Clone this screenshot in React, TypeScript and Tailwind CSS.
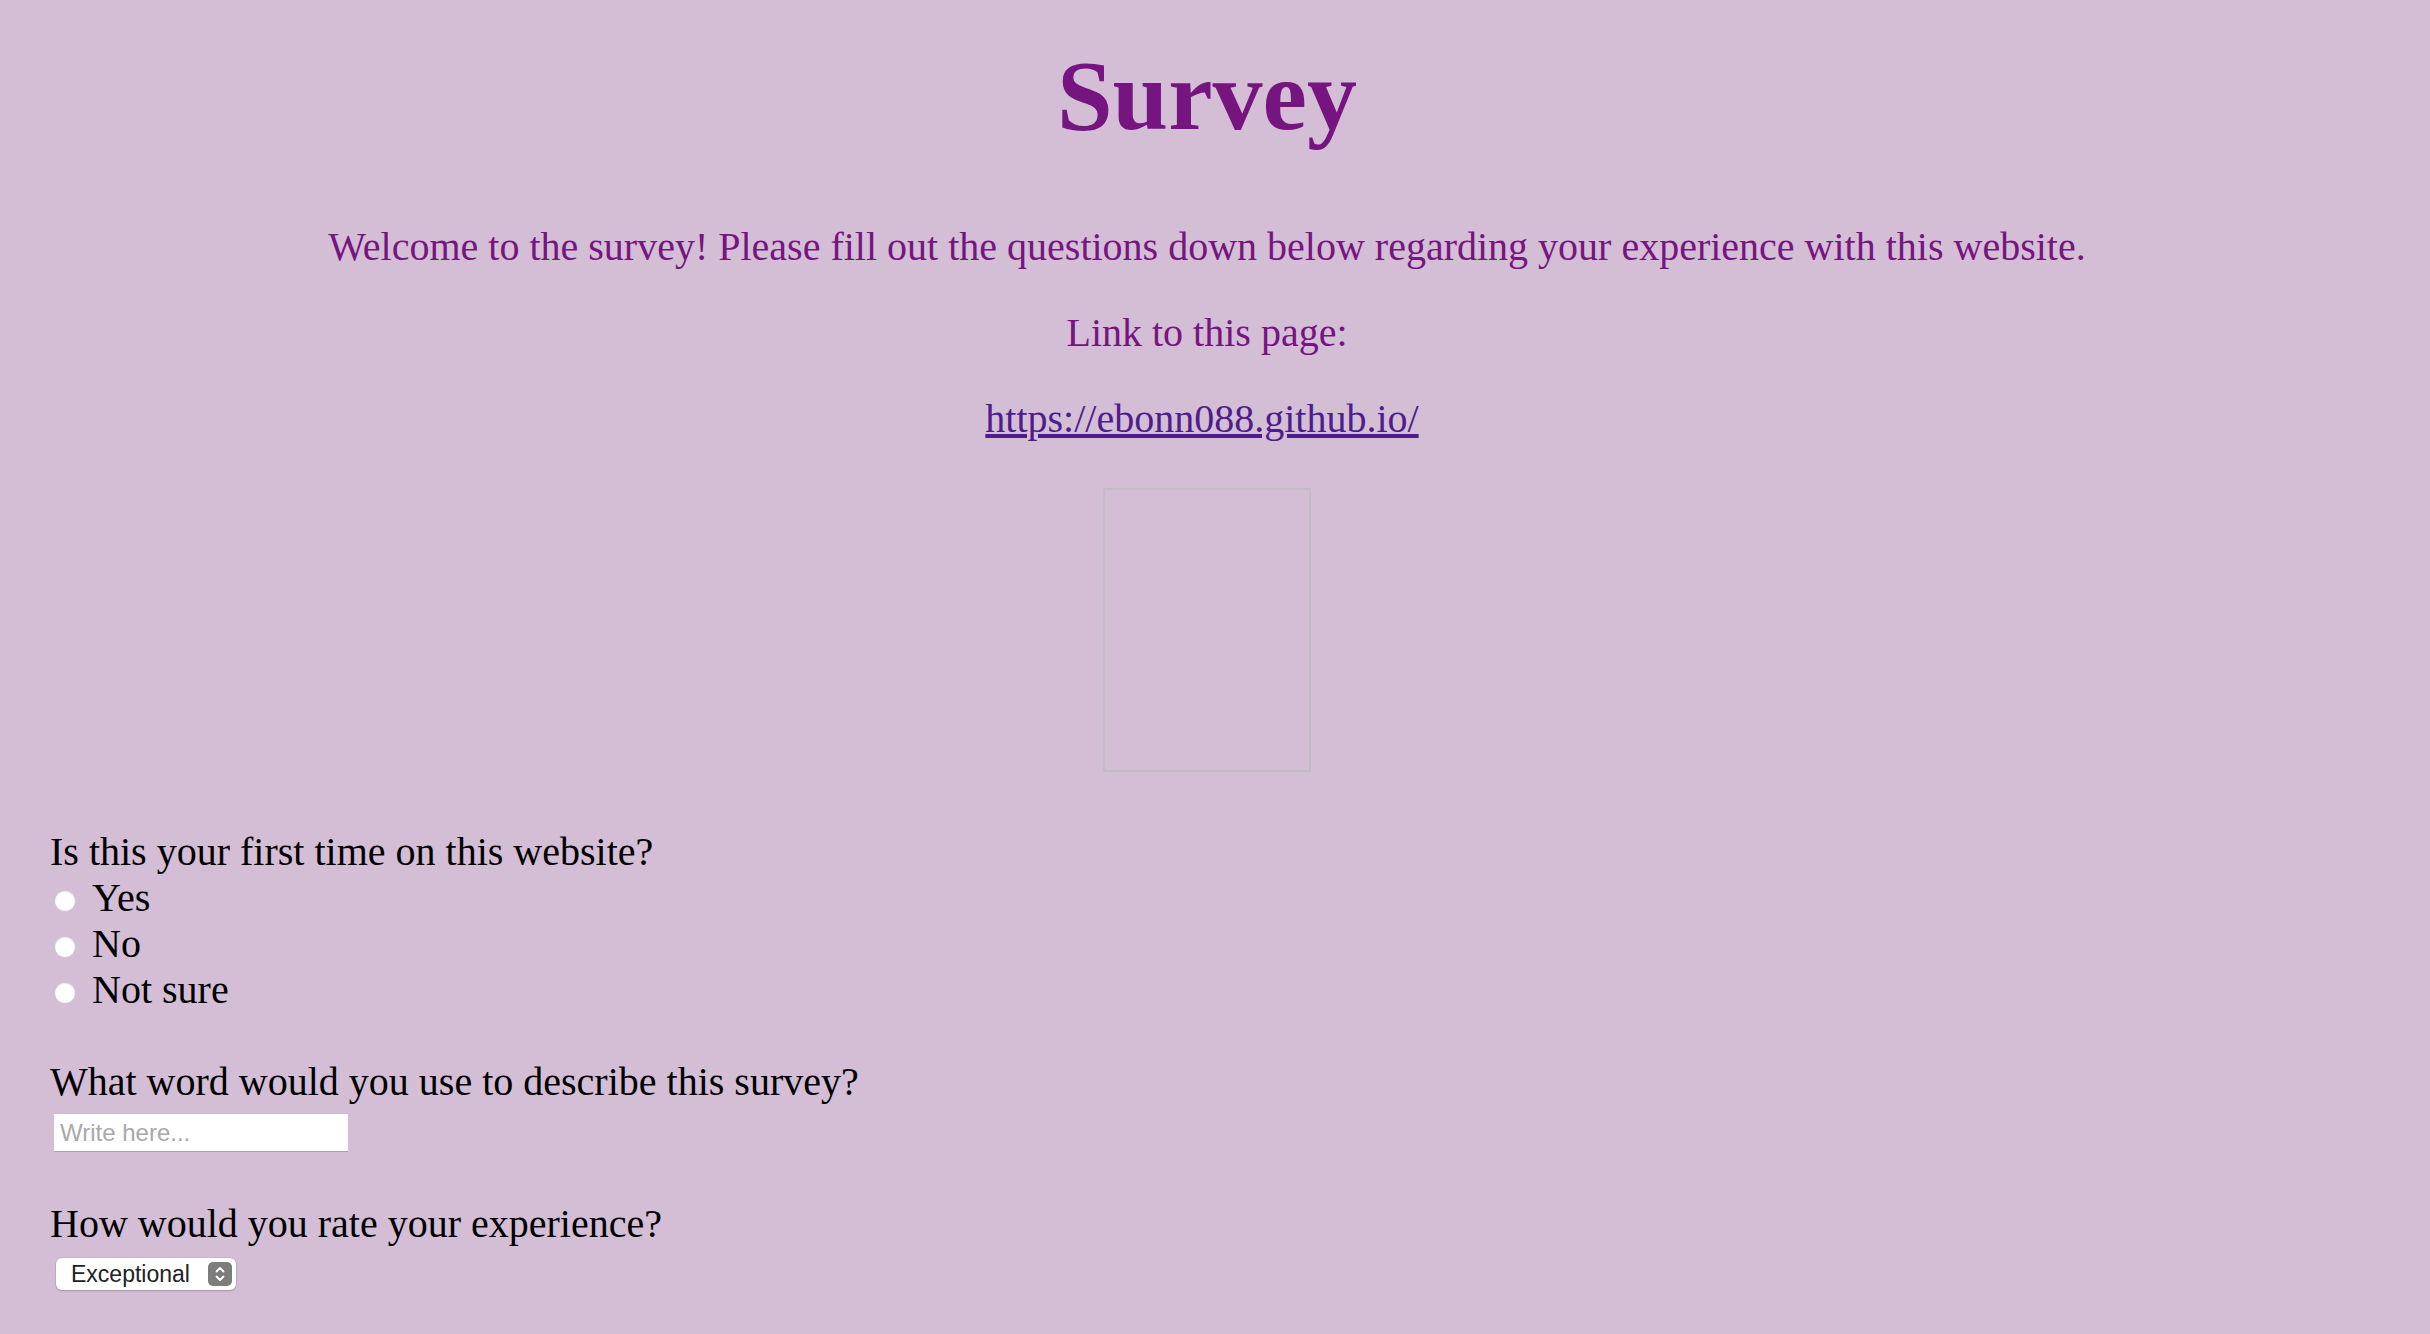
import React from "react";

export default function App() {
  const serif = { fontFamily: '"Liberation Serif", "Times New Roman", serif' } as React.CSSProperties;
  const sans = { fontFamily: '"Liberation Sans", Arial, sans-serif' } as React.CSSProperties;
  const options = ["Yes", "No", "Not sure"];
  return (
    <div className="min-h-screen w-full bg-[#d3bed6] overflow-hidden" style={serif}>
      <div className="w-[2414px] flex flex-col">
        <h1 className="mt-[46px] text-center text-[100px] leading-[100px] font-bold text-[#771580]">
          Survey
        </h1>
        <p className="mt-[78px] text-center text-[40px] leading-[46px] text-[#771580]">
          Welcome to the survey! Please fill out the questions down below regarding your experience with this website.
        </p>
        <p className="mt-[40px] text-center text-[40px] leading-[46px] text-[#771580]">
          Link to this page:
        </p>
        <p className="mt-[40px] pr-[10px] text-center text-[40px] leading-[46px]">
          <a href="#" className="underline text-[#4e1c8c]">
            https://ebonn088.github.io/
          </a>
        </p>
        <div className="mt-[46px] self-center w-[208px] h-[284px] border-2 border-[#c4bcc5]" />

        <form className="mt-[57px] pl-[50px] flex flex-col text-[40px] leading-[46px] text-black">
          <div>Is this your first time on this website?</div>
          {options.map((o) => (
            <label key={o} className="flex items-start">
              <input
                type="radio"
                name="first"
                className="appearance-none mt-[15px] ml-[4px] w-[22px] h-[22px] rounded-full bg-white border border-[#cfc5d1] shadow-[inset_0_1px_1px_rgba(0,0,0,0.08)]"
              />
              <span className="ml-[16px]">{o}</span>
            </label>
          ))}
          <div className="mt-[46px]">What word would you use to describe this survey?</div>
          <input
            type="text"
            placeholder="Write here..."
            className="mt-[8px] ml-[4px] w-[294px] h-[39px] bg-white border-t border-b border-t-[#c9bdca] border-b-[#ab9fad] px-[6px] text-[24px] text-black placeholder:text-[#a9a9a9] outline-none"
            style={sans}
          />
          <div className="mt-[49px]">How would you rate your experience?</div>
          <div
            role="combobox"
            className="mt-[11px] ml-[6px] w-[180px] h-[32px] rounded-[6px] bg-white pl-[15px] pr-[4px] flex items-center justify-between shadow-[0_0_0_0.5px_rgba(0,0,0,0.08),0_1px_2px_rgba(0,0,0,0.22)]"
            style={sans}
          >
            <span className="text-[23px] leading-[32px] text-[#222]">Exceptional</span>
            <span className="w-[24px] h-[24px] rounded-[5px] bg-[#7d7d7d] flex items-center justify-center">
              <svg width="12" height="18" viewBox="0 0 12 18" fill="none">
                <path d="M2.5 6.5 L6 3 L9.5 6.5" stroke="white" strokeWidth="1.8" strokeLinecap="round" strokeLinejoin="round" />
                <path d="M2.5 11.5 L6 15 L9.5 11.5" stroke="white" strokeWidth="1.8" strokeLinecap="round" strokeLinejoin="round" />
              </svg>
            </span>
          </div>
        </form>
      </div>
    </div>
  );
}
